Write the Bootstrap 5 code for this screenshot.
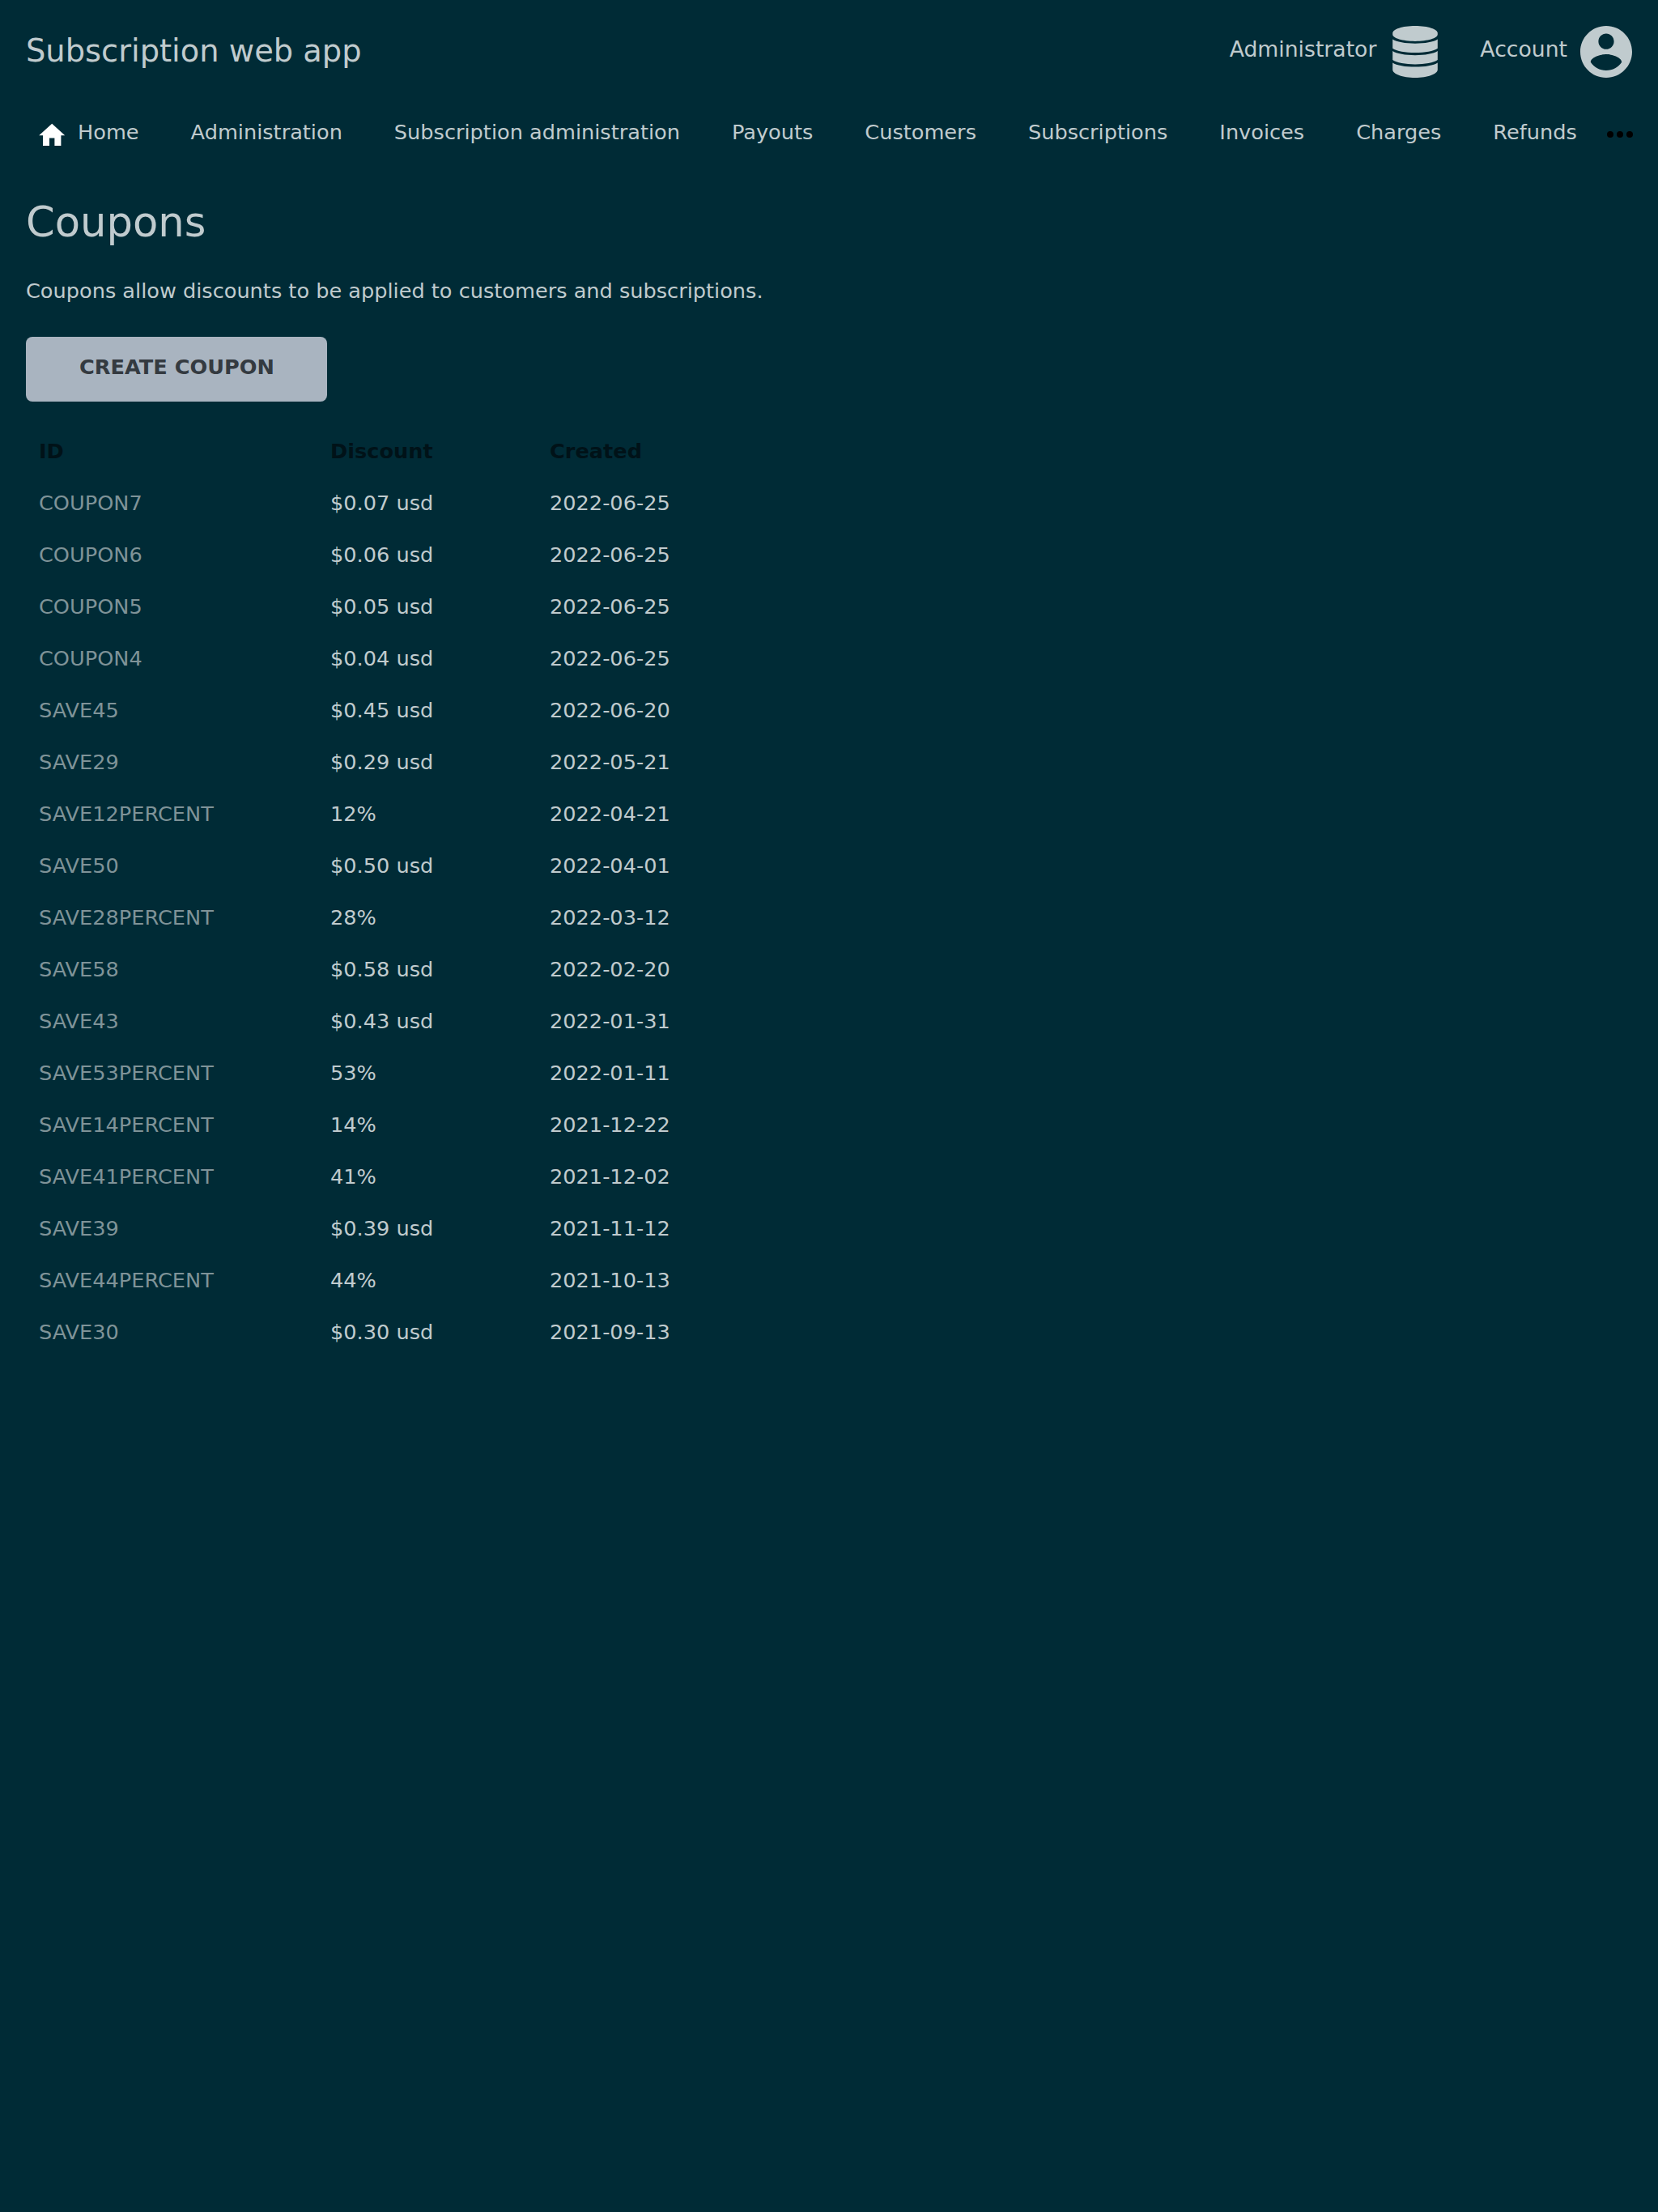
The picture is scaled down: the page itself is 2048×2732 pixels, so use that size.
<!DOCTYPE html>
<html lang="en">
<head>
<meta charset="utf-8">
<title>Coupons</title>
<link href="https://cdn.jsdelivr.net/npm/bootstrap@5.3.0/dist/css/bootstrap.min.css" rel="stylesheet">
<script src="https://cdn.jsdelivr.net/npm/bootstrap@5.3.0/dist/js/bootstrap.bundle.min.js" defer></script>
<style>
body { background: #002b36; color: #c0cbce; font-family: "DejaVu Sans", sans-serif; font-size: 25.6px; line-height: 32px; min-height: 2732px; }
a { color: inherit; text-decoration: none; }
.topbar { height: 128px; padding: 0 32px; }
.app-title { font-size: 38.4px; line-height: 48px; margin-top: -2px; }
.top-link { font-size: 26.667px; }
.top-link span { margin-top: -7px; }
.menu-row { height: 64px; padding: 6px 26px 0 44.8px; gap: 64px; white-space: nowrap; }
.menu-row > * { flex-shrink: 0; }
.home-link { gap: 12.8px; }
.home-link svg { margin-top: 8px; }
.more-dots { margin: 6px 0 0 -31px; }
.page-body { padding: 50px 32px 0; }
.page-title { font-size: 51.2px; line-height: 64px; margin-bottom: 37px; }
.intro-text { margin-bottom: 41px; }
.btn-create, .btn-create:hover { background: #a9b4c0; color: #343a40; }
.btn-create { width: 372px; height: 80px; border: 0; border-radius: 8px; font-size: 25.6px; padding: 0 0 6px 1px; margin-bottom: 29px; }
.coupon-table { width: 845px; table-layout: fixed; }
.coupon-table th, .coupon-table td { height: 64px; padding: 0 16px; background: transparent; border: 0; vertical-align: middle; color: #c0cbce; }
.coupon-table th { color: #001218; }
.coupon-table td:first-child { color: #7f9398; }
.col-id { width: 360px; }
.col-discount { width: 271px; }
</style>
</head>
<body>
<header>
<div class="topbar d-flex align-items-center justify-content-between">
<a class="app-title" href="#">Subscription web app</a>
<div class="d-flex align-items-center">
<a class="top-link d-flex align-items-center" href="#"><span>Administrator</span>
<svg class="ms-3" width="64" height="64" viewBox="0 0 64 64" fill="currentColor"><path d="M4.200 9C4.200 4 16 0 32 0s27.800 4 27.800 9v1.500C59.800 15 47.500 18.900 32 18.900S4.200 15 4.200 10.500z"/><path d="M4.200 16.600C9 19.800 20 21.800 32 21.800s23-2 27.800-5.200v11.100C55 31 44 33 32 33S9 31 4.200 27.700z"/><path d="M4.200 31C9 34.200 20 36.200 32 36.200s23-2 27.800-5.200v11.100C55 45.400 44 47.400 32 47.400S9 45.400 4.200 42.100z"/><path d="M4.200 45.400C9 48.600 20 50.600 32 50.600s23-2 27.800-5.200V54c0 5.300-12.300 10-27.800 10S4.200 59.300 4.200 54z"/></svg></a>
<a class="top-link d-flex align-items-center ms-5" href="#"><span>Account</span>
<svg class="ms-3" width="64" height="64" viewBox="2 2 20 20" fill="currentColor"><path d="M12 2C6.480 2 2 6.480 2 12s4.480 10 10 10 10-4.480 10-10S17.520 2 12 2zm0 3c1.660 0 3 1.340 3 3s-1.340 3-3 3-3-1.340-3-3 1.340-3 3-3zm0 14.200c-2.500 0-4.710-1.280-6-3.220.03-1.990 4-3.080 6-3.080 1.990 0 5.970 1.090 6 3.080-1.290 1.940-3.500 3.220-6 3.220z"/></svg></a>
</div>
</div>
<nav class="menu-row d-flex align-items-center">
<a class="home-link d-flex align-items-center" href="#"><svg width="38.4" height="38.4" viewBox="0 0 24 24" fill="#fff"><path d="M10 20v-6h4v6h5v-8h3L12 3 2 12h3v8z"/></svg><span>Home</span></a>
<a href="#">Administration</a><a href="#">Subscription administration</a><a href="#">Payouts</a><a href="#">Customers</a><a href="#">Subscriptions</a><a href="#">Invoices</a><a href="#">Charges</a><a href="#">Refunds</a>
<svg class="more-dots" width="40" height="32" viewBox="0 0 40 32"><circle cx="8" cy="16" r="4"/><circle cx="20" cy="16" r="4"/><circle cx="32" cy="16" r="4"/></svg>
</nav>
</header>
<main class="page-body">
<h1 class="page-title fw-normal">Coupons</h1>
<p class="intro-text">Coupons allow discounts to be applied to customers and subscriptions.</p>
<button class="btn btn-create d-block fw-bold" type="button">CREATE COUPON</button>
<table class="coupon-table">
<colgroup><col class="col-id"><col class="col-discount"><col></colgroup>
<thead><tr><th>ID</th><th>Discount</th><th>Created</th></tr></thead>
<tbody>
<tr><td>COUPON7</td><td>$0.07 usd</td><td>2022-06-25</td></tr>
<tr><td>COUPON6</td><td>$0.06 usd</td><td>2022-06-25</td></tr>
<tr><td>COUPON5</td><td>$0.05 usd</td><td>2022-06-25</td></tr>
<tr><td>COUPON4</td><td>$0.04 usd</td><td>2022-06-25</td></tr>
<tr><td>SAVE45</td><td>$0.45 usd</td><td>2022-06-20</td></tr>
<tr><td>SAVE29</td><td>$0.29 usd</td><td>2022-05-21</td></tr>
<tr><td>SAVE12PERCENT</td><td>12%</td><td>2022-04-21</td></tr>
<tr><td>SAVE50</td><td>$0.50 usd</td><td>2022-04-01</td></tr>
<tr><td>SAVE28PERCENT</td><td>28%</td><td>2022-03-12</td></tr>
<tr><td>SAVE58</td><td>$0.58 usd</td><td>2022-02-20</td></tr>
<tr><td>SAVE43</td><td>$0.43 usd</td><td>2022-01-31</td></tr>
<tr><td>SAVE53PERCENT</td><td>53%</td><td>2022-01-11</td></tr>
<tr><td>SAVE14PERCENT</td><td>14%</td><td>2021-12-22</td></tr>
<tr><td>SAVE41PERCENT</td><td>41%</td><td>2021-12-02</td></tr>
<tr><td>SAVE39</td><td>$0.39 usd</td><td>2021-11-12</td></tr>
<tr><td>SAVE44PERCENT</td><td>44%</td><td>2021-10-13</td></tr>
<tr><td>SAVE30</td><td>$0.30 usd</td><td>2021-09-13</td></tr>
</tbody>
</table>
</main>
</body>
</html>
